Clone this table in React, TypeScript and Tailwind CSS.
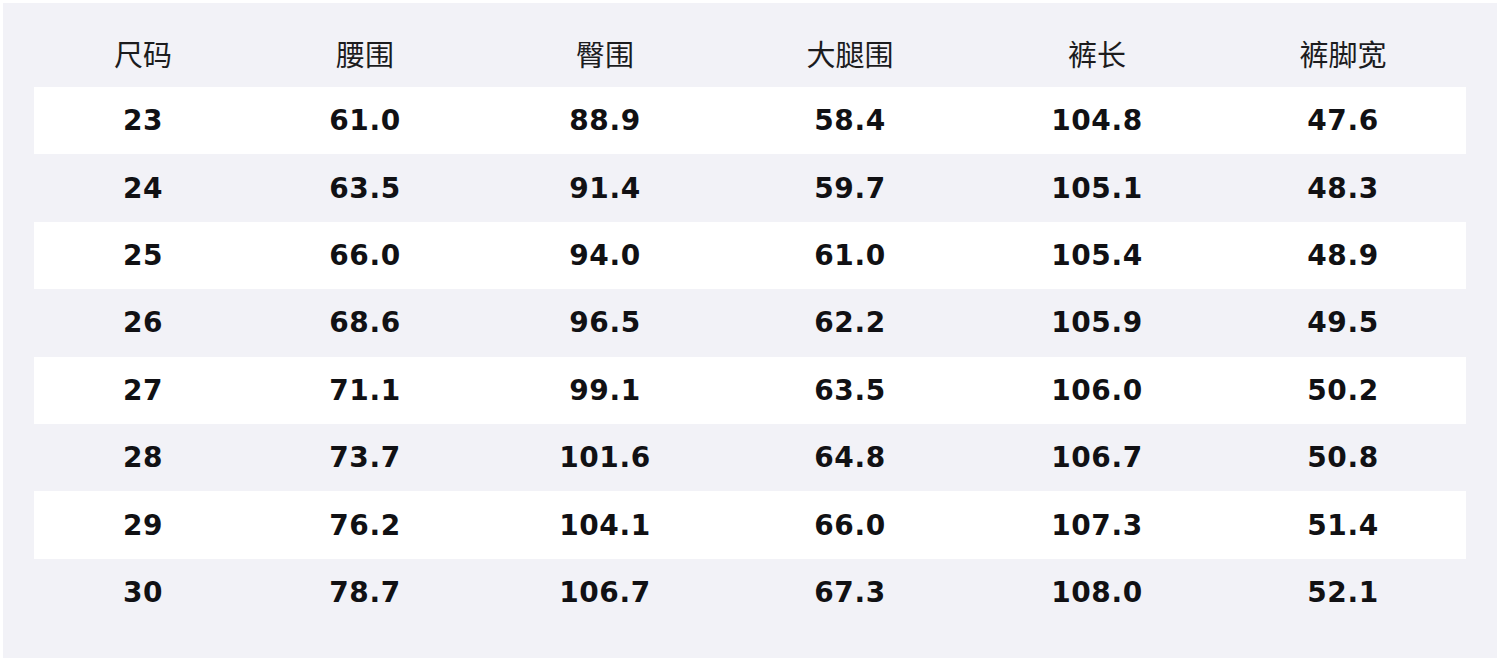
import React from "react";

const headers = ["尺码", "腰围", "臀围", "大腿围", "裤长", "裤脚宽"];

const rows = [
  ["23", "61.0", "88.9", "58.4", "104.8", "47.6"],
  ["24", "63.5", "91.4", "59.7", "105.1", "48.3"],
  ["25", "66.0", "94.0", "61.0", "105.4", "48.9"],
  ["26", "68.6", "96.5", "62.2", "105.9", "49.5"],
  ["27", "71.1", "99.1", "63.5", "106.0", "50.2"],
  ["28", "73.7", "101.6", "64.8", "106.7", "50.8"],
  ["29", "76.2", "104.1", "66.0", "107.3", "51.4"],
  ["30", "78.7", "106.7", "67.3", "108.0", "52.1"],
];

const cols = "grid grid-cols-[218px_226px_254px_236px_258px_234px]";

const App = () => {
  return (
    <div className="w-[1500px] h-[661px] bg-white p-[3px] font-['DejaVu_Sans','Noto_Sans_CJK_SC',sans-serif]">
      <div className="w-full h-full bg-[#f2f2f7] px-[31px] pt-[18px]">
        {/* header */}
        <div className={`${cols} h-[66px] items-center text-[29px] text-[#1c1c1e] font-['Noto_Sans_CJK_SC',sans-serif]`}>
          {headers.map((h) => (
            <div key={h} className="text-center">
              {h}
            </div>
          ))}
        </div>

        {/* body */}
        <div>
          {rows.map((row, i) => (
            <div
              key={row[0]}
              className={`${cols} h-[67.4px] items-center ${
                i % 2 === 0 ? "bg-white" : ""
              }`}
            >
              {row.map((cell, j) => (
                <div
                  key={j}
                  className="text-center text-[28px] font-bold text-[#111114] tracking-[0.6px] pt-[1px]"
                >
                  {cell}
                </div>
              ))}
            </div>
          ))}
        </div>
      </div>
    </div>
  );
};

export default App;
